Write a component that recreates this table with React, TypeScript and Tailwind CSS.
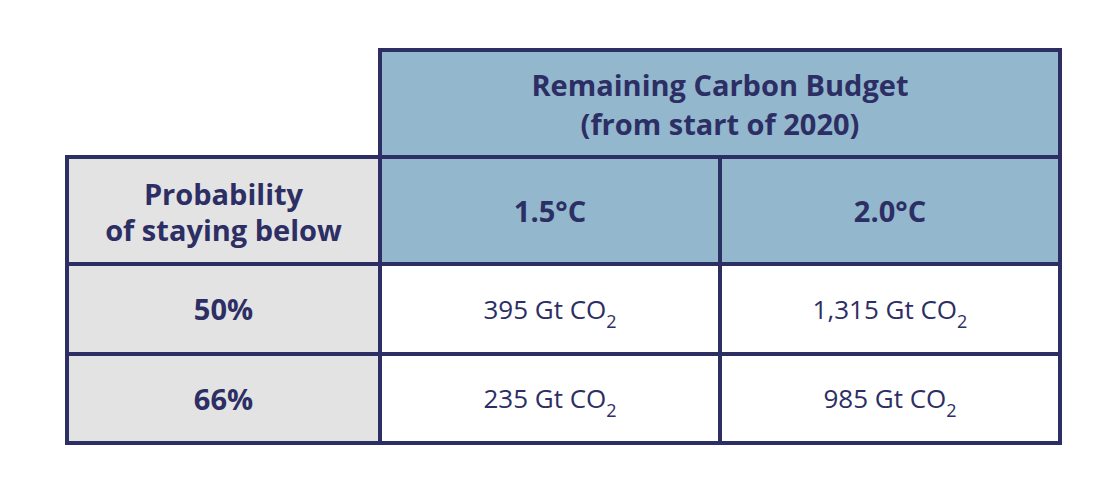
import React from "react";

const font = { fontFamily: '"Open Sans", "Noto Sans", sans-serif' };

function Co2({ value }: { value: string }) {
  return (
    <span>
      {value} Gt CO<sub className="text-[18px] relative top-[9px] align-baseline">2</sub>
    </span>
  );
}

export default function App() {
  return (
    <div className="w-[1106px] h-[488px] bg-white pl-[65px] pt-[48px]" style={font}>
      <div className="flex">
        <div className="w-[313px]" />
        <div className="w-[684px] h-[107px] border-[4px] border-b-0 border-[#2c2e64] bg-[#93b7cd] flex flex-col items-center justify-center text-[#2c2e64] font-bold text-[29px] leading-[39px] text-center">
          <div>Remaining Carbon Budget</div>
          <div>(from start of 2020)</div>
        </div>
      </div>
      <div className="w-[997px] bg-[#2c2e64] p-[4px] grid grid-cols-[309px_336px_336px] grid-rows-[103px_86px_85px] gap-[4px] text-[#2c2e64]">
        <div className="bg-[#e3e3e3] flex flex-col items-center justify-center font-bold text-[29px] leading-[36px] text-center pt-[2px]">
          <div>Probability</div>
          <div>of staying below</div>
        </div>
        <div className="bg-[#93b7cd] flex items-center justify-center font-bold text-[29px]">1.5°C</div>
        <div className="bg-[#93b7cd] flex items-center justify-center font-bold text-[29px]">2.0°C</div>
        <div className="bg-[#e3e3e3] flex items-center justify-center font-bold text-[29px]">50%</div>
        <div className="bg-white flex items-center justify-center text-[26px]"><Co2 value="395" /></div>
        <div className="bg-white flex items-center justify-center text-[26px]"><Co2 value="1,315" /></div>
        <div className="bg-[#e3e3e3] flex items-center justify-center font-bold text-[29px]">66%</div>
        <div className="bg-white flex items-center justify-center text-[26px]"><Co2 value="235" /></div>
        <div className="bg-white flex items-center justify-center text-[26px]"><Co2 value="985" /></div>
      </div>
    </div>
  );
}
